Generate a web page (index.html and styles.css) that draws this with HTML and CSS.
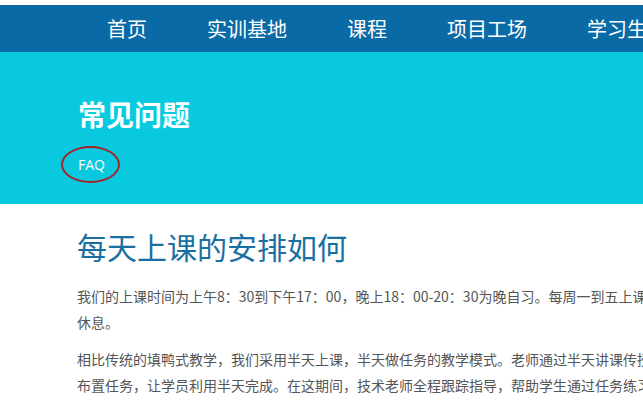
FILE: index.html
```html
<!DOCTYPE html>
<html lang="zh-CN">
<head>
<meta charset="utf-8">
<title>常见问题</title>
<link rel="stylesheet" href="styles.css">
</head>
<body>
<header class="topbar">
  <nav class="nav">
    <a class="nav-item" href="#">首页</a>
    <a class="nav-item" href="#">实训基地</a>
    <a class="nav-item" href="#">课程</a>
    <a class="nav-item" href="#">项目工场</a>
    <a class="nav-item" href="#">学习生活</a>
  </nav>
</header>
<section class="banner">
  <h1 class="banner-title">常见问题</h1>
  <div class="banner-sub"><span class="faq">FAQ</span></div>
</section>
<main class="content">
  <h2 class="q-title">每天上课的安排如何</h2>
  <p class="q-text">我们的上课时间为上午8：30到下午17：00，晚上18：00-20：30为晚自习。每周一到五上课，周六日休息。</p>
  <p class="q-text">相比传统的填鸭式教学，我们采用半天上课，半天做任务的教学模式。老师通过半天讲课传授知识，布置任务，让学员利用半天完成。在这期间，技术老师全程跟踪指导，帮助学生通过任务练习巩固所学知识。</p>
</main>
</body>
</html>
```

FILE: styles.css
```css
html, body {
  margin: 0;
  padding: 0;
}
body {
  width: 643px;
  height: 401px;
  overflow: hidden;
  background: #ffffff;
  font-family: "Noto Sans CJK SC", "Open Sans", sans-serif;
  padding-top: 5px;
  box-sizing: border-box;
}
.topbar {
  background: #0a6aa6;
  height: 47px;
  width: 800px;
}
.nav {
  display: flex;
  align-items: center;
  height: 100%;
  padding-left: 107px;
  gap: 60px;
}
.nav-item {
  color: #ffffff;
  text-decoration: none;
  font-size: 20px;
  line-height: 24px;
  white-space: nowrap;
}
.banner {
  background: #08c9dd;
  height: 152px;
  box-sizing: border-box;
  padding: 47px 0 0 78px;
}
.banner-title {
  margin: 0;
  color: #ffffff;
  font-size: 28px;
  line-height: 30px;
  font-weight: 700;
}
.banner-sub {
  margin-top: 26px;
  display: flex;
}
.faq {
  position: relative;
  color: #ffffff;
  font-family: "Open Sans", "Noto Sans", sans-serif;
  font-size: 14px;
  line-height: 20px;
}
.faq::after {
  content: "";
  position: absolute;
  left: -17px;
  top: -9px;
  width: 55px;
  height: 33px;
  border: 2.5px solid #a8222a;
  border-radius: 50%;
}
.content {
  width: 626px;
  padding: 22px 0 0 77px;
}
.q-title {
  margin: 0 0 17px;
  font-size: 30px;
  line-height: 40px;
  font-weight: 400;
  color: #1a6fa2;
}
.q-text {
  margin: 0 0 11px;
  font-size: 14px;
  line-height: 26px;
  color: #555555;
}
```
